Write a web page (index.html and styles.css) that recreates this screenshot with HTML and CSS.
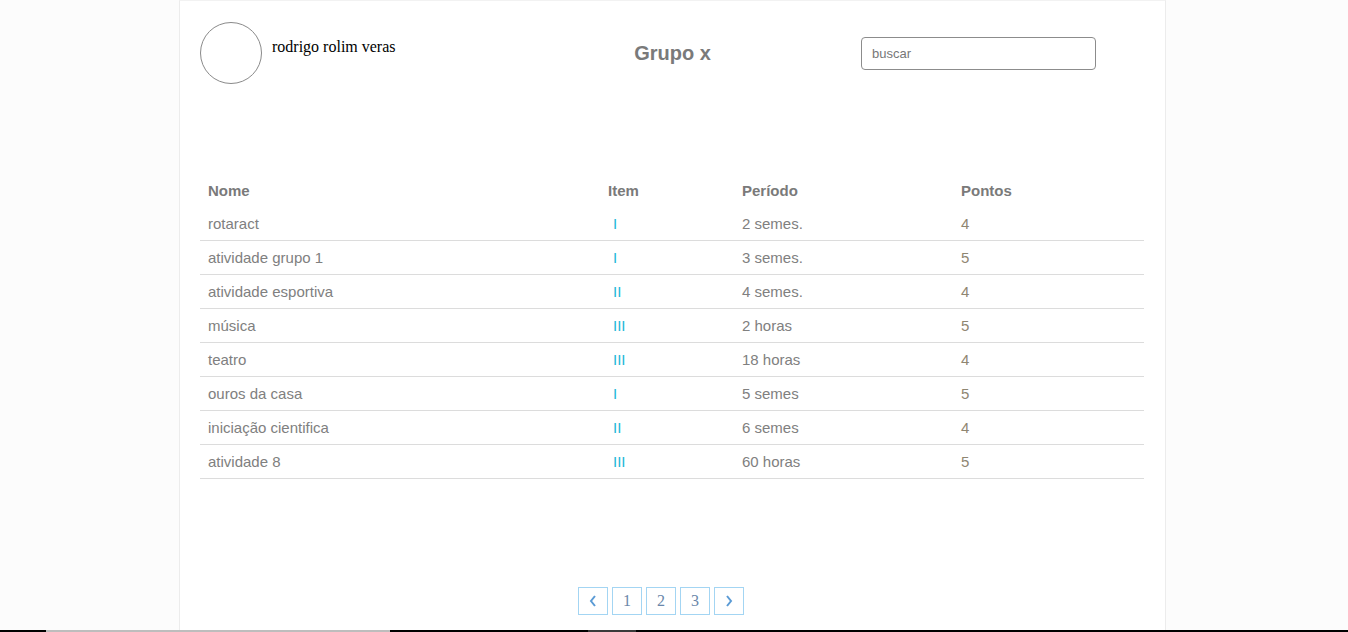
FILE: index.html
```html
<!DOCTYPE html>
<html lang="pt">
<head>
<meta charset="utf-8">
<title>Grupo x</title>
<link rel="stylesheet" href="styles.css">
</head>
<body>
<div class="page">
  <main class="container">
    <header class="top">
      <div class="user">
        <div class="avatar"></div>
        <span class="user-name">rodrigo rolim veras</span>
      </div>
      <h1 class="title">Grupo x</h1>
      <input class="search" type="text" placeholder="buscar">
    </header>

    <table class="grid">
      <colgroup>
        <col class="c-nome"><col class="c-item"><col class="c-periodo"><col class="c-pontos">
      </colgroup>
      <thead>
        <tr><th>Nome</th><th>Item</th><th>Período</th><th>Pontos</th></tr>
      </thead>
      <tbody>
        <tr><td>rotaract</td><td class="item">I</td><td>2 semes.</td><td class="pts">4</td></tr>
        <tr><td>atividade grupo 1</td><td class="item">I</td><td>3 semes.</td><td class="pts">5</td></tr>
        <tr><td>atividade esportiva</td><td class="item">II</td><td>4 semes.</td><td class="pts">4</td></tr>
        <tr><td>música</td><td class="item">III</td><td>2 horas</td><td class="pts">5</td></tr>
        <tr><td>teatro</td><td class="item">III</td><td>18 horas</td><td class="pts">4</td></tr>
        <tr><td>ouros da casa</td><td class="item">I</td><td>5 semes</td><td class="pts">5</td></tr>
        <tr><td>iniciação cientifica</td><td class="item">II</td><td>6 semes</td><td class="pts">4</td></tr>
        <tr><td>atividade 8</td><td class="item">III</td><td>60 horas</td><td class="pts">5</td></tr>
      </tbody>
    </table>

    <nav class="pager">
      <a class="pg" href="#"><svg width="10" height="14" viewBox="0 0 10 14"><polyline points="7,2 3,7 7,12" fill="none" stroke="#5b9bd5" stroke-width="2"/></svg></a>
      <a class="pg" href="#">1</a>
      <a class="pg" href="#">2</a>
      <a class="pg" href="#">3</a>
      <a class="pg" href="#"><svg width="10" height="14" viewBox="0 0 10 14"><polyline points="3,2 7,7 3,12" fill="none" stroke="#5b9bd5" stroke-width="2"/></svg></a>
    </nav>
  </main>
  <div class="strip">
    <span class="s-black s1"></span>
    <span class="s-light s2"></span>
    <span class="s-black s3"></span>
    <span class="s-dark s4"></span>
    <span class="s-black s5"></span>
  </div>
</div>
</body>
</html>
```

FILE: styles.css
```css
html, body {
  margin: 0;
  padding: 0;
  height: 100%;
}
body {
  background: #fcfcfc;
  font-family: "Liberation Sans", Arial, sans-serif;
  overflow: hidden;
}
.page {
  height: 100vh;
  display: flex;
  flex-direction: column;
}
.container {
  flex: 1;
  box-sizing: border-box;
  width: 987px;
  margin: 0 182px 0 179px;
  background: #fff;
  border-left: 1px solid #ececec;
  border-right: 1px solid #ececec;
  border-top: 1px solid #f2f2f2;
  padding: 21px 21px 0 20px;
  display: flex;
  flex-direction: column;
}
.top {
  display: grid;
  grid-template-columns: 1fr auto 1fr;
  align-items: center;
  height: 62px;
}
.user {
  display: flex;
  align-items: flex-start;
  height: 62px;
}
.avatar {
  width: 62px;
  height: 62px;
  box-sizing: border-box;
  border: 1px solid #8a8a8a;
  border-radius: 50%;
  flex: none;
}
.user-name {
  font-family: "Liberation Serif", "Times New Roman", serif;
  font-size: 16px;
  color: #000;
  margin-left: 10px;
  margin-top: 16px;
}
.title {
  margin: 0;
  font-size: 20px;
  font-weight: bold;
  color: #7a7a7a;
  line-height: 24px;
  padding-left: 1px;
}
.search {
  justify-self: end;
  margin-right: 48px;
  width: 235px;
  height: 33px;
  box-sizing: border-box;
  border: 1px solid #8c8c8c;
  border-radius: 4px;
  padding: 0 10px;
  font-family: "Liberation Sans", Arial, sans-serif;
  font-size: 13px;
  color: #555;
  background: #fff;
  outline: none;
}
.search::placeholder {
  color: #777;
}
.grid {
  margin-top: 89px;
  width: 944px;
  border-collapse: collapse;
  table-layout: fixed;
  font-size: 15px;
  color: #808080;
}
.c-nome { width: 400px; }
.c-item { width: 134px; }
.c-periodo { width: 219px; }
.c-pontos { width: 191px; }
.grid th {
  text-align: left;
  font-weight: bold;
  color: #7a7a7a;
  line-height: 33px;
  padding: 1px 8px 0;
}
.grid td {
  line-height: 33px;
  padding: 0 8px;
  border-bottom: 1px solid #dcdcdc;
}
.grid td.item {
  color: #1bb7d8;
  padding-left: 13px;
}
.grid td.pts {
  color: #8f8672;
}
.pager {
  margin-top: 108px;
  display: flex;
  justify-content: center;
  gap: 4px;
  padding-right: 22px;
}
.pg {
  width: 30px;
  height: 28px;
  box-sizing: border-box;
  border: 1px solid #a3d5f3;
  display: flex;
  align-items: center;
  justify-content: center;
  font-family: "Liberation Serif", "Times New Roman", serif;
  font-size: 16px;
  color: #6a87aa;
  text-decoration: none;
}
.strip {
  height: 2px;
  display: flex;
  flex: none;
}
.strip span { display: block; height: 2px; }
.s-black { background: #000; }
.s-light { background: #bdbdbd; }
.s-dark { background: #3a3a3a; }
.s1 { width: 46px; }
.s2 { width: 344px; }
.s3 { width: 198px; }
.s4 { width: 48px; }
.s5 { flex: 1; }
```
